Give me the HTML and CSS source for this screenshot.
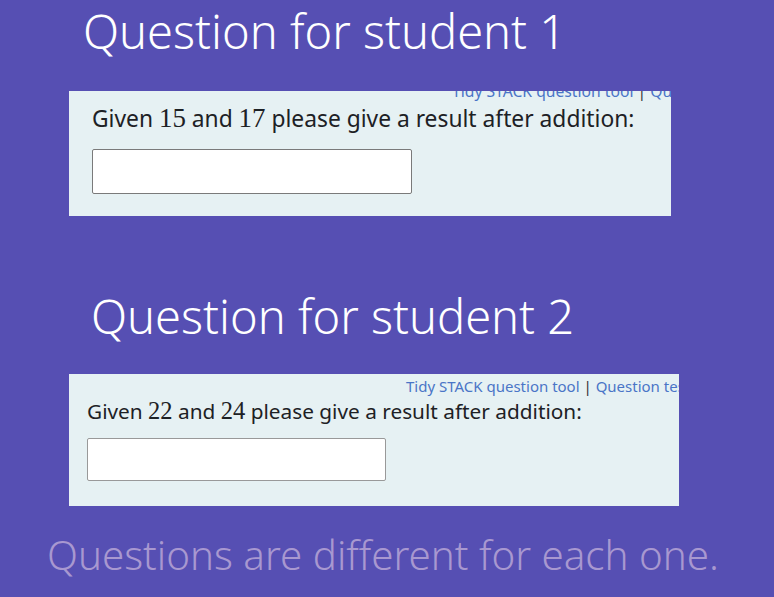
FILE: index.html
```html
<!DOCTYPE html>
<html>
<head>
<meta charset="utf-8">
<link rel="stylesheet" href="styles.css">
</head>
<body>
<main class="page">
  <h1 class="title title-one">Question for student 1</h1>
  <section class="panel panel-one">
    <div class="tools">Tidy STACK question tool <span class="sep">|</span> Question tests</div>
    <p class="prompt">Given <span class="math">15</span> and <span class="math">17</span> please give a result after addition:</p>
    <input class="answer" type="text">
  </section>

  <h1 class="title title-two">Question for student 2</h1>
  <section class="panel panel-two">
    <div class="tools">Tidy STACK question tool <span class="sep">|</span> Question tests</div>
    <p class="prompt">Given <span class="math">22</span> and <span class="math">24</span> please give a result after addition:</p>
    <input class="answer" type="text">
  </section>

  <p class="note">Questions are different for each one.</p>
</main>
</body>
</html>
```

FILE: styles.css
```css
html, body {
  margin: 0;
  padding: 0;
  background: #564fb3;
}
.page {
  width: 774px;
  height: 597px;
  overflow: hidden;
  display: flex;
  flex-direction: column;
}
.title {
  margin: 0;
  font-family: "Noto Sans", sans-serif;
  font-weight: 300;
  color: #ffffff;
  white-space: nowrap;
  line-height: 1;
}
.title-one {
  font-size: 47px;
  margin: 8px 0 0 83px;
  height: 83px;
}
.title-two {
  font-size: 47px;
  margin: 77px 0 0 91px;
  height: 81px;
}
.panel {
  margin-left: 69px;
  background: #e6f1f3;
  overflow: hidden;
  font-family: "Noto Sans", sans-serif;
  color: #1d2125;
}
.panel-one {
  width: 602px;
  height: 125px;
}
.panel-two {
  width: 610px;
  height: 132px;
}
.tools {
  white-space: nowrap;
  color: #4a75c7;
  line-height: 1;
}
.sep {
  color: #333;
}
.panel-one .tools {
  font-size: 15.7px;
  margin: -7px 0 0 383px;
}
.panel-two .tools {
  font-size: 15px;
  margin: 5px 0 0 337px;
}
.prompt {
  margin: 0;
  white-space: nowrap;
  line-height: 28px;
  height: 28px;
}
.panel-one .prompt {
  font-size: 22.8px;
  padding: 5px 0 0 23px;
}
.panel-two .prompt {
  font-size: 20.8px;
  padding: 3px 0 0 18px;
}
.math {
  font-family: "Liberation Serif", serif;
  font-size: 1.18em;
  line-height: 1;
}
.answer {
  display: block;
  box-sizing: border-box;
  background: #fff;
  border: 1px solid #7a7a7a;
  border-radius: 2px;
  padding: 0;
}
.panel-one .answer {
  width: 320px;
  height: 45px;
  margin: 16px 0 0 23px;
}
.panel-two .answer {
  width: 299px;
  height: 43px;
  margin: 13px 0 0 18px;
  border-color: #999;
}
.note {
  margin: 29px 0 0 47px;
  font-family: "Noto Sans", sans-serif;
  font-weight: 300;
  font-size: 40.3px;
  color: #a898d0;
  white-space: nowrap;
  line-height: 1;
}
```
